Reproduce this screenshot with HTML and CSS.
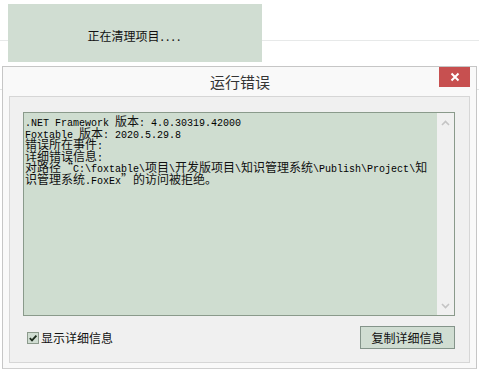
FILE: index.html
```html
<!DOCTYPE html>
<html lang="zh-CN">
<head>
<meta charset="utf-8">
<link rel="stylesheet" href="styles.css">
</head>
<body>
<div class="page">
  <div class="top">
    <div class="busy"><span class="busy-text">正在清理项目<span class="dots">....</span></span></div>
  </div>
  <div class="dialog">
    <div class="titlebar">
      <span></span>
      <span class="title">运行错误</span>
      <button class="close" aria-label="关闭"><svg width="10" height="10" viewBox="0 0 10 10"><path d="M1.5 1.5 L8.5 8.5 M8.5 1.5 L1.5 8.5" stroke="#fff" stroke-width="2" fill="none"/></svg></button>
    </div>
    <div class="panel">
      <div class="textbox">
        <div class="text">
          <div class="line">.NET Framework <span class="c">版本</span>: 4.0.30319.42000</div>
          <div class="line">Foxtable <span class="c">版本</span>: 2020.5.29.8</div>
          <div class="line"><span class="c">错误所在事件</span>:</div>
          <div class="line"><span class="c">详细错误信息</span>:</div>
          <div class="line"><span class="c">对路径<span class="q">“</span></span>C:\foxtable\<span class="c">项目</span>\<span class="c">开发版项目</span>\<span class="c">知识管理系统</span>\Publish\Project\<span class="c">知</span></div>
          <div class="line"><span class="c">识管理系统</span>.FoxEx<span class="c"><span class="q">”</span>的访问被拒绝。</span></div>
        </div>
        <div class="scroll">
          <svg class="arrow" width="9" height="6" viewBox="0 0 9 6"><path d="M1 5 L4.5 1.5 L8 5" stroke="#c4c4c4" stroke-width="1.6" fill="none"/></svg>
          <svg class="arrow" width="9" height="6" viewBox="0 0 9 6"><path d="M1 1 L4.5 4.5 L8 1" stroke="#c4c4c4" stroke-width="1.6" fill="none"/></svg>
        </div>
      </div>
      <div class="footer">
        <label class="chk"><span class="box"><svg width="10" height="10" viewBox="0 0 10 10"><path d="M1.8 5.2 L4 7.4 L8.4 2.6" stroke="#1c2a1c" stroke-width="1.8" fill="none"/></svg></span>显示详细信息</label>
        <button class="copy">复制详细信息</button>
      </div>
    </div>
  </div>
</div>
</body>
</html>
```

FILE: styles.css
```css
html, body {
  margin: 0;
  padding: 0;
  background: #ffffff;
}
.page {
  width: 479px;
  height: 370px;
  font-family: "Noto Sans CJK SC", "Noto Sans", sans-serif;
  background:
    linear-gradient(to bottom, transparent 40px, #e7e9e9 40px, #e7e9e9 41px, transparent 41px),
    linear-gradient(to bottom, transparent 89px, #e2e4e4 89px, #e2e4e4 90px, transparent 90px);
}
.top {
  height: 66px;
  padding: 4px 0 0 8px;
  box-sizing: border-box;
}
.busy {
  width: 254px;
  height: 58px;
  background: #d0ddd2;
  display: flex;
  align-items: center;
  justify-content: center;
  padding-top: 6px;
  box-sizing: border-box;
}
.busy-text {
  font-size: 12px;
  color: #111;
  line-height: 14px;
}
.dots {
  letter-spacing: 2.2px;
  margin-left: 1px;
}
.dialog {
  margin-left: 2px;
  width: 475px;
  height: 303px;
  box-sizing: border-box;
  border: 1px solid #c6c6c6;
  border-bottom-color: #cfcfcf;
  background: #f9f9f9;
  padding: 0 6px 5px 6px;
}
.titlebar {
  height: 29px;
  display: grid;
  grid-template-columns: 1fr auto 1fr;
  align-items: start;
}
.title {
  font-size: 15px;
  color: #333;
  line-height: 15px;
  margin-top: 7px;
  padding-left: 1px;
}
.close {
  justify-self: end;
  width: 31px;
  height: 20px;
  border: none;
  padding: 0;
  margin: 0;
  background: #c75050;
  display: flex;
  align-items: center;
  justify-content: center;
}
.panel {
  height: 267px;
  box-sizing: border-box;
  border: 1px solid #d6d6d6;
  background: #f0f0f0;
  padding: 15px 14px 0 13px;
}
.textbox {
  height: 204px;
  box-sizing: border-box;
  border: 1px solid #8a9a8b;
  background: #cfddd0;
  display: flex;
}
.text {
  flex: 1;
  padding: 2px 0 0 1px;
  font-family: "Liberation Mono", monospace;
  font-size: 10px;
  color: #000;
}
.line {
  height: 11.5px;
  line-height: 11.5px;
  white-space: pre;
}
.c {
  font-family: "Noto Sans CJK SC", sans-serif;
  font-size: 12px;
  line-height: 11.5px;
  color: #111;
}
.q {
  display: inline-block;
  width: 12px;
  text-align: center;
}
.scroll {
  width: 17px;
  background: #f0f0f0;
  display: flex;
  flex-direction: column;
  justify-content: space-between;
  align-items: center;
  padding: 7px 0 6px;
  box-sizing: border-box;
}
.footer {
  display: flex;
  justify-content: space-between;
  align-items: center;
  margin-top: 10px;
  height: 23px;
}
.chk {
  display: flex;
  align-items: center;
  font-size: 12px;
  color: #111;
  padding-left: 4px;
  line-height: 14px;
}
.box {
  width: 12px;
  height: 12px;
  box-sizing: border-box;
  border: 1px solid #8c9a8c;
  background: #d0ddd2;
  display: flex;
  align-items: center;
  justify-content: center;
  margin-right: 2px;
}
.copy {
  width: 95px;
  height: 23px;
  box-sizing: border-box;
  border: 1px solid #84948a;
  background: #d0ddd2;
  font-family: "Noto Sans CJK SC", sans-serif;
  font-size: 12px;
  color: #111;
  padding: 0;
  margin: 0;
  line-height: 14px;
}
```
